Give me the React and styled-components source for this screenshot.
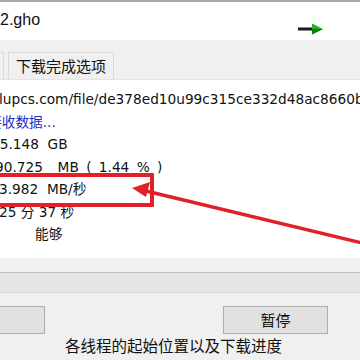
import React from "react";
import styled, { createGlobalStyle } from "styled-components";

const GlobalStyle = createGlobalStyle`
    html, body {
        margin: 0;
        padding: 0;
        background: #ffffff;
        overflow: hidden;
    }
`;

const CJK = `"DejaVu Sans", "Noto Sans CJK SC", sans-serif`;

const Window = styled.div`
    width: 360px;
    height: 360px;
    display: flex;
    flex-direction: column;
    overflow: hidden;
    font-family: ${CJK};
    color: #111;
`;

const TitleArea = styled.div`
    height: 38px;
    border-top: 2px solid #a8a8a8;
    background: #ffffff;
    display: flex;
    align-items: center;
    justify-content: space-between;
    padding-right: 36px;
`;

const FileName = styled.span`
    font-family: "Liberation Sans", "Noto Sans CJK SC", sans-serif;
    font-size: 16px;
    margin-top: -2px;
`;

const ArrowIcon = styled.svg`
    width: 26px;
    height: 12px;
    margin-top: 16px;
`;

const TabStrip = styled.div`
    height: 40px;
    background: #f0f0f0;
    display: flex;
    align-items: flex-end;
    gap: 4px;
    border-bottom: 1px solid #e4e4e4;
    box-sizing: border-box;
`;

const Tab = styled.div`
    height: 27px;
    box-sizing: border-box;
    border: 1px solid #d9d9d9;
    border-bottom: none;
    background: #f0f0f0;
    font-family: "Noto Sans CJK SC", sans-serif;
    font-size: 15px;
    line-height: 26px;
    padding: 0 ${(p) => (p.$cut ? "0" : "7px")};
    width: ${(p) => (p.$cut ? "5px" : "auto")};
    margin-left: ${(p) => (p.$cut ? "-1px" : "0")};
`;

const Content = styled.div`
    height: 178px;
    background: #ffffff;
    position: relative;
    overflow: hidden;
    padding-top: 8px;
    box-sizing: border-box;
`;

const Line = styled.div`
    height: 22.5px;
    line-height: 22.5px;
    font-size: 13.7px;
    white-space: nowrap;
    word-spacing: ${(p) => p.$spread || 0}px;
    margin-left: ${(p) => p.$shift || 0}px;
    color: ${(p) => (p.$blue ? "#1a2fbf" : "#111")};
`;

const RedBox = styled.div`
    position: absolute;
    left: -10px;
    top: 93px;
    width: 156px;
    height: 26px;
    border: 4px solid #e2202a;
    border-radius: 1px;
`;

const Pointer = styled.svg`
    position: absolute;
    left: 0;
    top: 0;
    width: 360px;
    height: 178px;
    pointer-events: none;
`;

const Panel = styled.div`
    flex: 1;
    background: #f0f0f0;
    display: flex;
    flex-direction: column;
    padding-top: 14px;
`;

const ProgressTrack = styled.div`
    height: 19px;
    background: #e6e6e6;
    border-top: 1px solid #bcbcbc;
    border-bottom: 1px solid #d6d6d6;
`;

const ButtonRow = styled.div`
    display: flex;
    justify-content: space-between;
    padding: 13px 32px 0 0;
`;

const Button = styled.div`
    height: 28px;
    box-sizing: border-box;
    width: ${(p) => p.$w}px;
    margin-left: ${(p) => p.$ml || 0}px;
    background: #e1e1e1;
    border: 1px solid #adadad;
    font-family: "Noto Sans CJK SC", sans-serif;
    font-size: 15px;
    line-height: 26px;
    text-align: center;
`;

const Caption = styled.div`
    font-family: "Noto Sans CJK SC", sans-serif;
    font-size: 15.5px;
    line-height: 22px;
    padding-left: 65px;
    white-space: nowrap;
`;

export default function App() {
    return (
        <>
            <GlobalStyle />
            <Window>
                <TitleArea>
                    <FileName>2.gho</FileName>
                    <ArrowIcon viewBox="0 0 26 12">
                        <rect x="0" y="4.5" width="16" height="3" fill="#1a1a1a" />
                        <path d="M14 0.5 L25 6 L14 11.5 Z" fill="#22b422" />
                        <path d="M14 6 L25 6 L14 11.5 Z" fill="#117a11" />
                    </ArrowIcon>
                </TitleArea>
                <TabStrip>
                    <Tab $cut />
                    <Tab>下载完成选项</Tab>
                </TabStrip>
                <Content>
                    <Line $shift={-1}>lupcs.com/file/de378ed10u99c315ce332d48ac8660b</Line>
                    <Line $shift={-12} $blue>接收数据...</Line>
                    <Line $shift={-9}>15.148&nbsp; GB</Line>
                    <Line $shift={-5} $spread={3}>90.725&nbsp; MB ( 1.44 % )</Line>
                    <Line $shift={-1}>3.982&nbsp; MB/秒</Line>
                    <Line $shift={-1}>25 分 37 秒</Line>
                    <Line $shift={35}>能够</Line>
                    <RedBox />
                    <Pointer viewBox="0 0 360 178">
                        <line x1="146" y1="111" x2="362" y2="163" stroke="#e2202a" strokeWidth="3.5" />
                        <path d="M132 108 L150 102 L146 117 Z" fill="#e2202a" />
                    </Pointer>
                </Content>
                <Panel>
                    <ProgressTrack />
                    <ButtonRow>
                        <Button $w={60} $ml={-15} />
                        <Button $w={105}>暂停</Button>
                    </ButtonRow>
                    <Caption>各线程的起始位置以及下载进度</Caption>
                </Panel>
            </Window>
        </>
    );
}
